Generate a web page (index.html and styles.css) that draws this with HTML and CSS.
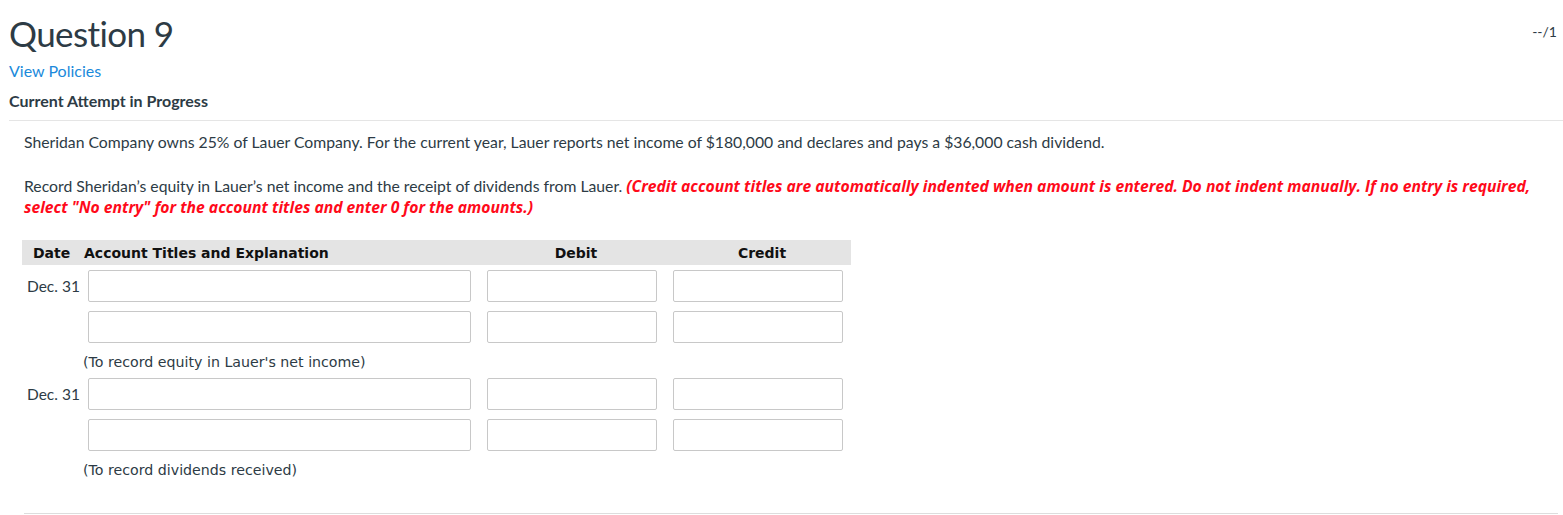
FILE: index.html
```html
<!DOCTYPE html>
<html lang="en">

<head>
    <meta charset="UTF-8">
    <title>Question 9</title>
    <link rel="stylesheet" href="styles.css">
</head>

<body>
    <div class="question-page">
        <div class="question-header">
            <h1 class="question-title">Question 9</h1>
            <span class="question-score">--/1</span>
        </div>
        <a class="policies-link" href="#">View Policies</a>
        <div class="attempt-status">Current Attempt in Progress</div>

        <div class="question-body">
            <p class="question-text">Sheridan Company owns 25% of Lauer Company. For the current year, Lauer reports net income of $180,000 and declares and pays a $36,000 cash dividend.</p>
            <p class="question-text">Record Sheridan’s equity in Lauer’s net income and the receipt of dividends from Lauer. <span class="instructions">(Credit account titles are automatically indented when amount is entered. Do not indent manually. If no entry is required, select "No entry" for the account titles and enter 0 for the amounts.)</span></p>

            <div class="journal">
                <div class="journal-row journal-head">
                    <div class="col-date">Date</div>
                    <div class="col-account">Account Titles and Explanation</div>
                    <div class="col-amount">Debit</div>
                    <div class="col-amount">Credit</div>
                </div>

                <div class="journal-row">
                    <div class="col-date">Dec. 31</div>
                    <div class="col-account"><input class="account-input" type="text"></div>
                    <div class="col-amount"><input class="amount-input" type="text"></div>
                    <div class="col-amount"><input class="amount-input" type="text"></div>
                </div>
                <div class="journal-row">
                    <div class="col-date"></div>
                    <div class="col-account"><input class="account-input" type="text"></div>
                    <div class="col-amount"><input class="amount-input" type="text"></div>
                    <div class="col-amount"><input class="amount-input" type="text"></div>
                </div>
                <div class="journal-memo">(To record equity in Lauer's net income)</div>

                <div class="journal-row">
                    <div class="col-date">Dec. 31</div>
                    <div class="col-account"><input class="account-input" type="text"></div>
                    <div class="col-amount"><input class="amount-input" type="text"></div>
                    <div class="col-amount"><input class="amount-input" type="text"></div>
                </div>
                <div class="journal-row">
                    <div class="col-date"></div>
                    <div class="col-account"><input class="account-input" type="text"></div>
                    <div class="col-amount"><input class="amount-input" type="text"></div>
                    <div class="col-amount"><input class="amount-input" type="text"></div>
                </div>
                <div class="journal-memo">(To record dividends received)</div>
            </div>
        </div>
    </div>
</body>

</html>
```

FILE: styles.css
```css
body {
    margin: 0;
    font-family: Lato, "Open Sans", sans-serif;
    color: #2d3b45;
    background: #fff;
}

.question-page {
    padding: 0 0 0 9px;
}

.question-header {
    display: flex;
    justify-content: space-between;
    align-items: flex-start;
}

.question-title {
    margin: 11px 0 0;
    font-size: 35px;
    font-weight: 400;
    letter-spacing: -0.6px;
    line-height: 44px;
}

.question-score {
    margin: 23px 6px 0 0;
    font-size: 14px;
    line-height: 18px;
}

.policies-link {
    display: block;
    margin-top: 6px;
    font-size: 16px;
    line-height: 20px;
    color: #1b8adb;
    text-decoration: none;
}

.attempt-status {
    margin-top: 9px;
    font-size: 16px;
    font-weight: 700;
    line-height: 22px;
}

.question-body {
    margin-top: 8px;
    border-top: 1px solid #e5e5e5;
    padding: 10px 0 0 15px;
}

.question-text {
    margin: 0 5px 23px 0;
    font-size: 15.75px;
    line-height: 21px;
}

.instructions {
    color: #ff0a1a;
    font-family: "Open Sans", Lato, sans-serif;
    font-size: 15.7px;
    font-weight: 700;
    font-style: italic;
    line-height: 18px;
}

.journal {
    margin-right: 5px;
    padding-bottom: 32px;
    border-bottom: 1px solid #ddd;
}

.journal-row {
    display: grid;
    grid-template-columns: 62px 395px 186px 186px;
    align-items: center;
    width: 829px;
    margin-left: -2px;
    padding: 5px 0 4px;
}

.journal-head {
    padding: 0;
    height: 25px;
    background: #e4e4e4;
    font-family: "DejaVu Sans", Verdana, sans-serif;
    font-size: 14px;
    font-weight: 700;
    color: #111;
}

.journal-head .col-date {
    padding-left: 11px;
    font-size: 14px;
}

.journal-head .col-account {
    padding-left: 0;
}

.journal-head .col-amount {
    text-align: center;
}

.col-date {
    padding-left: 5px;
    font-size: 15.5px;
}

.col-account {
    padding-left: 4px;
}

.col-amount {
    padding-left: 8px;
}

.account-input,
.amount-input {
    box-sizing: border-box;
    display: block;
    height: 32px;
    margin: 0;
    border: 1px solid #c8c8c8;
    border-radius: 2px;
    background: #fff;
}

.account-input {
    width: 383px;
}

.amount-input {
    width: 170px;
}

.journal-memo {
    height: 24px;
    padding: 2px 0 0 59px;
    line-height: 26px;
    font-family: "DejaVu Sans", Verdana, sans-serif;
    font-size: 14.2px;
    color: #2d3b45;
}
```
